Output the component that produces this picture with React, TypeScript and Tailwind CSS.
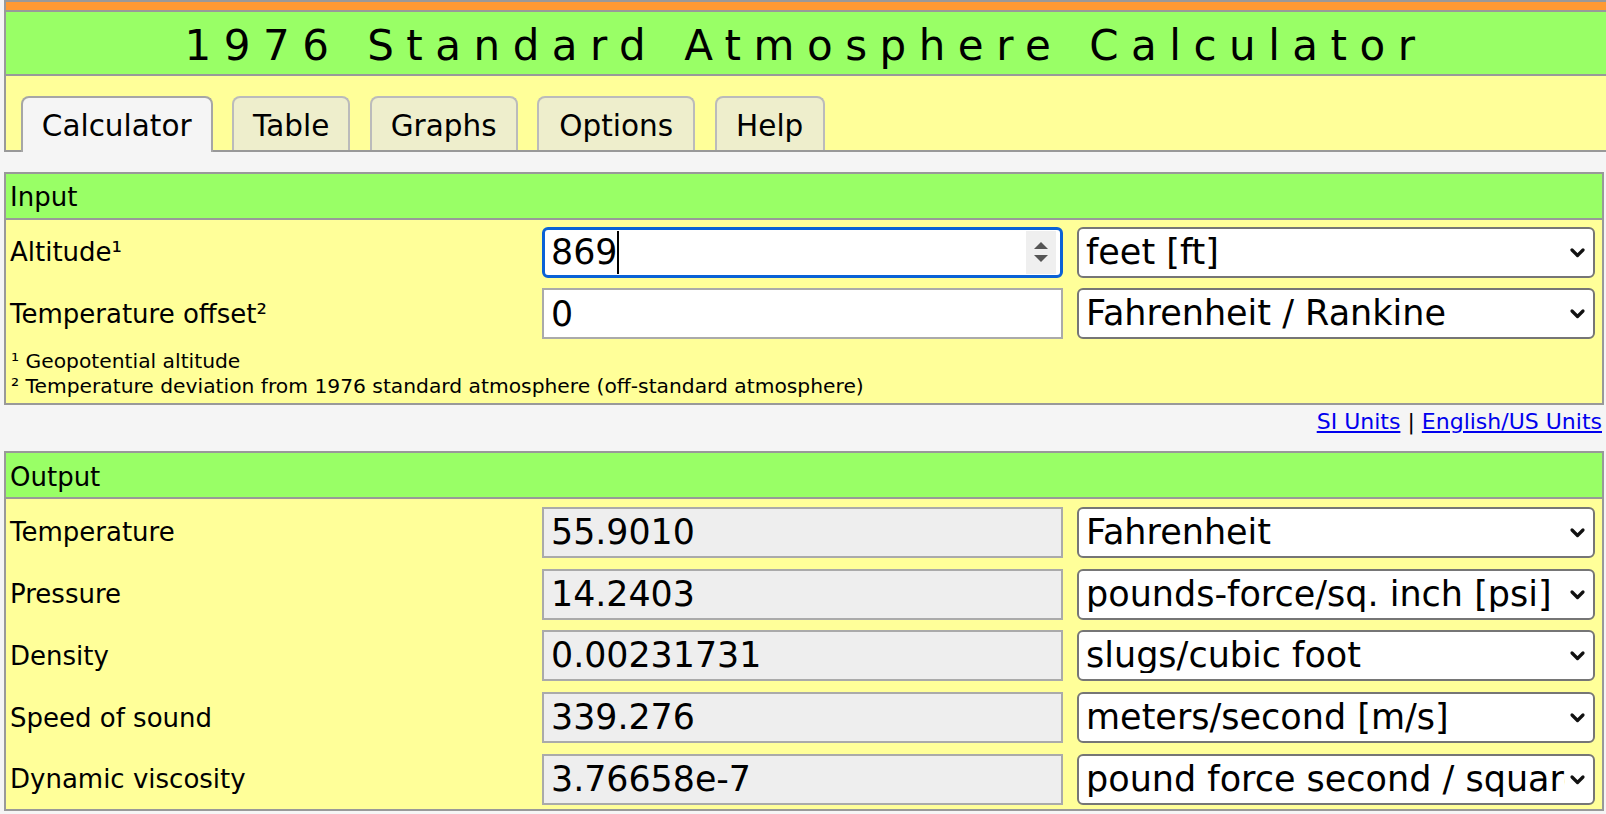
import React from "react";

const Chevron = () => (
  <svg width="17" height="11" viewBox="0 0 17 11" className="shrink-0 ml-[4px] mr-[7px]">
    <polyline
      points="3,3 8.5,8.5 14,3"
      fill="none"
      stroke="#111"
      strokeWidth="3.2"
      strokeLinecap="round"
      strokeLinejoin="round"
    />
  </svg>
);

function UnitSelect({ text }: { text: string }) {
  return (
    <div className="ml-[14px] w-[518px] h-[51px] shrink-0 bg-white border-2 border-[#767676] rounded-[6px] flex items-center pl-[7px]">
      <div className="flex-1 min-w-0 overflow-hidden whitespace-nowrap text-[35px] leading-none">{text}</div>
      <Chevron />
    </div>
  );
}

function Row({ label, unit, children }: { label: string; unit: string; children: React.ReactNode }) {
  return (
    <div className="flex items-center h-[51px]">
      <div className="w-[536px] shrink-0 pl-[4px] text-[26px] leading-none whitespace-nowrap">{label}</div>
      {children}
      <UnitSelect text={unit} />
    </div>
  );
}

function ValueBox({ value }: { value: string }) {
  return (
    <div className="w-[521px] h-[51px] shrink-0 border-2 border-[#aaa] bg-[#eeeeee] flex items-center px-[7px] text-[34.8px] leading-none">
      {value}
    </div>
  );
}

function PlainInput({ value }: { value: string }) {
  return (
    <div className="w-[521px] h-[51px] shrink-0 border-2 border-[#aaa] bg-white flex items-center px-[7px] text-[34.8px] leading-none">
      {value}
    </div>
  );
}

function FocusedInput({ value }: { value: string }) {
  return (
    <div className="w-[521px] h-[51px] shrink-0 border-[3px] border-[#0b62d6] rounded-[6px] bg-white flex items-center pl-[6px] pr-[4px]">
      <span className="text-[34.8px] leading-none">{value}</span>
      <span className="w-[2px] h-[43px] bg-black" />
      <div className="flex-1" />
      <div className="w-[30px] h-[43px] bg-[#efefef] flex flex-col items-center justify-center gap-[6px]">
        <svg width="14" height="7" viewBox="0 0 14 7">
          <polygon points="7,0 14,7 0,7" fill="#555" />
        </svg>
        <svg width="14" height="7" viewBox="0 0 14 7">
          <polygon points="0,0 14,0 7,7" fill="#555" />
        </svg>
      </div>
    </div>
  );
}

function Tab({ label, width, active }: { label: string; width: number; active?: boolean }) {
  const base =
    "rounded-t-[8px] border-2 border-b-0 flex justify-center pt-[14px] text-[29.5px] leading-none shrink-0";
  if (active) {
    return (
      <div
        className={`${base} relative z-10 h-[56px] -mb-[2px] bg-[#f5f5f5] border-[#a6a6a6]`}
        style={{ width }}
      >
        {label}
      </div>
    );
  }
  return (
    <div className={`${base} h-[54px] bg-[#eeeecc] border-[#bbbbbb]`} style={{ width }}>
      {label}
    </div>
  );
}

export default function App() {
  return (
    <div className="w-[1606px] h-[814px] overflow-hidden bg-[#f5f5f5] text-black font-['DejaVu_Sans',Verdana,sans-serif]">
      {/* Header */}
      <div className="ml-[4px] w-[1602px] border-2 border-r-0 border-[#999]">
        <div className="h-[10px] bg-[#ff9933] border-b-2 border-[#999]" />
        <div className="h-[64px] bg-[#99ff66] border-b-2 border-[#999] flex justify-center pt-[12.5px]">
          <h1 className="text-[42px] leading-none tracking-[12.5px] whitespace-nowrap">
            1976 Standard Atmosphere Calculator
          </h1>
        </div>
        <div className="h-[74px] bg-[#ffff99] flex items-end pl-[14.7px] gap-[19.5px]">
          <Tab label="Calculator" width={192} active />
          <Tab label="Table" width={118} />
          <Tab label="Graphs" width={148} />
          <Tab label="Options" width={158} />
          <Tab label="Help" width={110} />
        </div>
      </div>

      {/* Input panel */}
      <div className="ml-[4px] mt-[20px] w-[1600px] border-2 border-[#999] bg-[#ffff99]">
        <div className="h-[46px] bg-[#99ff66] border-b-2 border-[#999] pt-[10.4px] pl-[4px] text-[26px] leading-none">
          Input
        </div>
        <div className="pt-[6.8px] pb-[5px]">
          <div className="flex flex-col gap-[10.7px]">
            <Row label="Altitude¹" unit="feet [ft]">
              <FocusedInput value="869" />
            </Row>
            <Row label="Temperature offset²" unit="Fahrenheit / Rankine">
              <PlainInput value="0" />
            </Row>
          </div>
          <div className="mt-[10px] pl-[5px] text-[20.25px] leading-[24.3px]">
            <div>¹ Geopotential altitude</div>
            <div>² Temperature deviation from 1976 standard atmosphere (off-standard atmosphere)</div>
          </div>
        </div>
      </div>

      {/* Units links */}
      <div className="mt-[4px] flex justify-end pr-[4px] text-[22px] leading-[25px] whitespace-pre">
        <a className="text-[#0000ee] underline cursor-pointer">SI Units</a>
        <span>{" | "}</span>
        <a className="text-[#0000ee] underline cursor-pointer">English/US Units</a>
      </div>

      {/* Output panel */}
      <div className="ml-[4px] mt-[17.4px] w-[1600px] border-2 border-[#999] bg-[#ffff99]">
        <div className="h-[46px] bg-[#99ff66] border-b-2 border-[#999] pt-[10.4px] pl-[4px] text-[26px] leading-none">
          Output
        </div>
        <div className="pt-[7.5px] pb-[4px] flex flex-col gap-[10.7px]">
          <Row label="Temperature" unit="Fahrenheit">
            <ValueBox value="55.9010" />
          </Row>
          <Row label="Pressure" unit="pounds-force/sq. inch [psi]">
            <ValueBox value="14.2403" />
          </Row>
          <Row label="Density" unit="slugs/cubic foot">
            <ValueBox value="0.00231731" />
          </Row>
          <Row label="Speed of sound" unit="meters/second [m/s]">
            <ValueBox value="339.276" />
          </Row>
          <Row label="Dynamic viscosity" unit="pound force second / square foot">
            <ValueBox value="3.76658e-7" />
          </Row>
        </div>
      </div>
    </div>
  );
}
